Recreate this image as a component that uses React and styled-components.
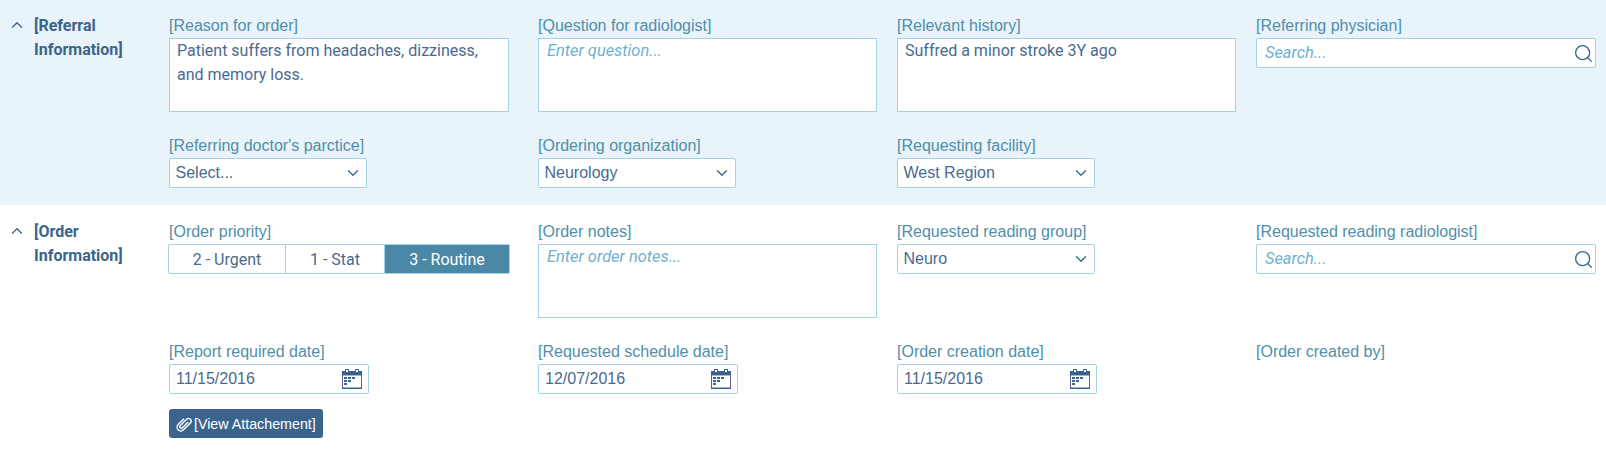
import React from "react";
import styled, { createGlobalStyle } from "styled-components";
import { ChevronUp, ChevronDown, Search } from "lucide-react";

const GlobalStyle = createGlobalStyle`
  html, body {
    margin: 0;
    padding: 0;
    background: #ffffff;
  }
  * {
    box-sizing: border-box;
  }
`;

const Page = styled.div`
  width: 1606px;
  height: 454px;
  overflow: hidden;
  font-family: "Liberation Sans", Arial, sans-serif;
`;

const Section = styled.section`
  display: flex;
  background: ${(p) => (p.$tinted ? "#e9f3fa" : "#ffffff")};
  padding: ${(p) => p.$padding};
`;

const SectionHead = styled.div`
  width: 169px;
  flex: none;
  display: flex;
  padding-left: 8px;
`;

const Toggle = styled.span`
  width: 20px;
  height: 20px;
  flex: none;
  display: flex;
  align-items: center;
  color: #3b648c;
`;

const SectionTitle = styled.h2`
  margin: -1px 0 0 6px;
  font: 700 16px/24px Roboto, sans-serif;
  color: #3b648c;
`;

const FieldGrid = styled.div`
  display: grid;
  grid-template-columns: 349px 339px 339px 340px;
  column-gap: 20px;
  row-gap: 23px;
`;

const Field = styled.div`
  display: flex;
  flex-direction: column;
  min-width: 0;
  padding-right: ${(p) => (p.$first ? "9px" : "0")};
`;

const Label = styled.label`
  height: 20px;
  margin-bottom: 3px;
  font-size: 16px;
  line-height: 22px;
  color: #4f8fab;
`;

const TextBox = styled.div`
  height: 74px;
  padding: 0 7px;
  background: #fff;
  border: 1px solid #a3d2e6;
  font: 400 16px/24px Roboto, sans-serif;
  color: #4a6a8f;
`;

const Placeholder = styled.span`
  font: italic 400 16.4px/24px Roboto, sans-serif;
  color: #6fb0d0;
`;

const NotePlaceholder = styled(Placeholder)`
  margin-left: 1px;
`;

const Control = styled.div`
  width: ${(p) => p.$width || "100%"};
  height: 30px;
  display: flex;
  align-items: center;
  justify-content: space-between;
  padding: ${(p) => p.$padding || "0 6px"};
  background: #fff;
  border: 1px solid #a3d2e6;
  border-radius: 2px;
  font-size: 16px;
  color: #4a6a8f;
  svg {
    flex: none;
    color: #3b648c;
  }
`;

const Segments = styled.div`
  width: 342px;
  height: 30px;
  margin-left: -1px;
  display: flex;
  border: 1px solid #a3d2e6;
  border-radius: 2px;
  background: #fff;
`;

const Segment = styled.div`
  width: ${(p) => p.$width}px;
  flex: none;
  display: flex;
  align-items: center;
  justify-content: center;
  border-left: ${(p) => (p.$first ? "none" : "1px solid #a3d2e6")};
  background: ${(p) => (p.$active ? "#4a88a5" : "transparent")};
  color: ${(p) => (p.$active ? "#ffffff" : "#4a6a8f")};
  font: 400 16px Roboto, sans-serif;
`;

const AttachButton = styled.button`
  width: 154px;
  height: 29px;
  margin-top: 15px;
  padding: 0 0 0 6px;
  display: flex;
  align-items: center;
  gap: 1px;
  border: none;
  border-radius: 3px;
  background: #3b648c;
  color: #fff;
  font-family: "Liberation Sans", Arial, sans-serif;
  font-size: 14.25px;
`;

const CalendarIcon = () => (
  <svg width="20" height="20" viewBox="0 0 20 20">
    <rect x="0.5" y="6" width="19" height="13.5" fill="#fff" stroke="#6b5b95" />
    <rect x="0" y="18.5" width="20" height="1.5" fill="#3b648c" />
    <rect x="0" y="2" width="20" height="4" fill="#3b648c" />
    <rect x="3.5" y="0.5" width="3" height="3" fill="#fff" stroke="#3b648c" />
    <rect x="13.5" y="0.5" width="3" height="3" fill="#fff" stroke="#3b648c" />
    <g fill="#3b648c">
      <rect x="2" y="8" width="3" height="2" />
      <rect x="6" y="8" width="3" height="2" />
      <rect x="10" y="8" width="3" height="2" />
      <rect x="2" y="11" width="3" height="2" />
      <rect x="6" y="11" width="3" height="2" />
      <rect x="2" y="14" width="3" height="2" />
    </g>
  </svg>
);

const ClipIcon = () => (
  <svg width="18" height="18" viewBox="0 0 24 24" fill="none" stroke="#fff" strokeWidth="1.9" strokeLinecap="round" strokeLinejoin="round">
    <path transform="rotate(45 12 12)" d="M14 7v10a2 2 0 0 1-4 0V5a3.5 3.5 0 0 1 7 0v13a5 5 0 0 1-10 0V8" />
  </svg>
);

const Select = ({ value }) => (
  <Control $width="198px" $padding="0 4px 0 5.5px">
    {value}
    <ChevronDown size={18} strokeWidth={1.7} />
  </Control>
);

const DateInput = ({ value }) => (
  <Control $width="200px">
    {value}
    <CalendarIcon />
  </Control>
);

const SearchInput = () => (
  <Control $padding="0 1px 0 8px">
    <Placeholder>Search...</Placeholder>
    <Search size={21} strokeWidth={1.5} />
  </Control>
);

const App = () => (
  <Page>
    <GlobalStyle />
    <Section $tinted $padding="15px 0 17px">
      <SectionHead>
        <Toggle>
          <ChevronUp size={18} strokeWidth={1.7} />
        </Toggle>
        <SectionTitle>
          [Referral
          <br />
          Information]
        </SectionTitle>
      </SectionHead>
      <FieldGrid>
        <Field $first>
          <Label>[Reason for order]</Label>
          <TextBox>
            Patient suffers from headaches, dizziness,
            <br />
            and memory loss.
          </TextBox>
        </Field>
        <Field>
          <Label>[Question for radiologist]</Label>
          <TextBox>
            <NotePlaceholder>Enter question...</NotePlaceholder>
          </TextBox>
        </Field>
        <Field>
          <Label>[Relevant history]</Label>
          <TextBox>Suffred a minor stroke 3Y ago</TextBox>
        </Field>
        <Field>
          <Label>[Referring physician]</Label>
          <SearchInput />
        </Field>
        <Field $first>
          <Label>[Referring doctor's parctice]</Label>
          <Select value="Select..." />
        </Field>
        <Field>
          <Label>[Ordering organization]</Label>
          <Select value="Neurology" />
        </Field>
        <Field>
          <Label>[Requesting facility]</Label>
          <Select value="West Region" />
        </Field>
      </FieldGrid>
    </Section>
    <Section $padding="16px 0 0">
      <SectionHead>
        <Toggle>
          <ChevronUp size={18} strokeWidth={1.7} />
        </Toggle>
        <SectionTitle>
          [Order
          <br />
          Information]
        </SectionTitle>
      </SectionHead>
      <FieldGrid>
        <Field $first>
          <Label>[Order priority]</Label>
          <Segments>
            <Segment $first $width={116}>2 - Urgent</Segment>
            <Segment $width={99}>1 - Stat</Segment>
            <Segment $active $width={125}>3 - Routine</Segment>
          </Segments>
        </Field>
        <Field>
          <Label>[Order notes]</Label>
          <TextBox>
            <NotePlaceholder>Enter order notes...</NotePlaceholder>
          </TextBox>
        </Field>
        <Field>
          <Label>[Requested reading group]</Label>
          <Select value="Neuro" />
        </Field>
        <Field>
          <Label>[Requested reading radiologist]</Label>
          <SearchInput />
        </Field>
        <Field $first>
          <Label>[Report required date]</Label>
          <DateInput value="11/15/2016" />
          <AttachButton>
            <ClipIcon />
            [View Attachement]
          </AttachButton>
        </Field>
        <Field>
          <Label>[Requested schedule date]</Label>
          <DateInput value="12/07/2016" />
        </Field>
        <Field>
          <Label>[Order creation date]</Label>
          <DateInput value="11/15/2016" />
        </Field>
        <Field>
          <Label>[Order created by]</Label>
        </Field>
      </FieldGrid>
    </Section>
  </Page>
);

export default App;
